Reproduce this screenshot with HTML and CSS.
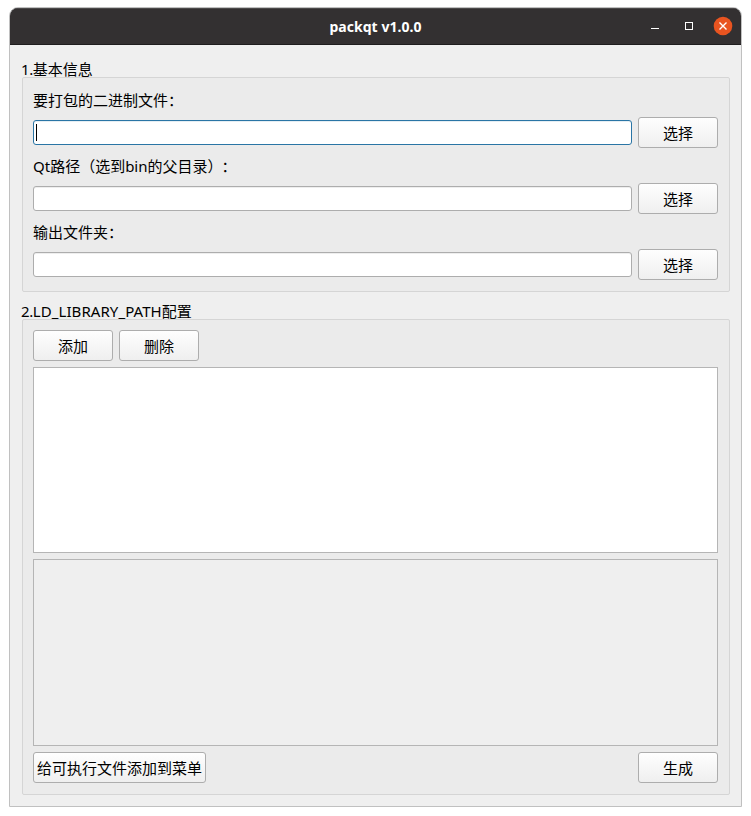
FILE: index.html
```html
<!DOCTYPE html>
<html lang="zh-CN">
<head>
<meta charset="utf-8">
<title>packqt v1.0.0</title>
<link rel="stylesheet" href="styles.css">
</head>
<body>
<div class="window">
  <header class="titlebar">
    <h1 class="caption">packqt v1.0.0</h1>
    <svg class="controls" width="90" height="20" viewBox="0 0 90 20">
      <path d="M9 10.500h8" stroke="#fff" fill="none"/>
      <rect x="43.500" y="4.500" width="7" height="7" stroke="#fff" fill="none"/>
      <circle cx="81" cy="8" r="9.300" fill="#e95420"/>
      <path d="M77.500 4.500l7 7M84.500 4.500l-7 7" stroke="#fff" stroke-width="1.400" fill="none"/>
    </svg>
  </header>
  <main class="content">
    <h2 class="group-title"><span class="num">1.</span>基本信息</h2>
    <section class="group">
      <label class="label">要打包的二进制文件：</label>
      <div class="row"><div class="input focused"><span class="caret"></span></div><button class="btn">选择</button></div>
      <label class="label qt-label">Qt路径（选到bin的父目录<span class="paren">）</span>：</label>
      <div class="row"><div class="input"></div><button class="btn">选择</button></div>
      <label class="label">输出文件夹：</label>
      <div class="row"><div class="input"></div><button class="btn">选择</button></div>
    </section>
    <h2 class="group-title second"><span class="num">2.</span><span class="path">LD_LIBRARY_PATH</span>配置</h2>
    <section class="group group-paths">
      <div class="row"><button class="btn">添加</button><button class="btn">删除</button></div>
      <div class="list"></div>
      <div class="log"></div>
      <div class="row spread"><button class="btn wide">给可执行文件添加到菜单</button><button class="btn">生成</button></div>
    </section>
  </main>
</div>
</body>
</html>
```
FILE: styles.css
```css
* { box-sizing: border-box; }
body {
  margin: 0;
  padding: 7px 9px 9px;
  width: 751px;
  height: 816px;
  overflow: hidden;
  background: #fff;
  color: #000;
  font: 15px/23px "Noto Sans", "Noto Sans CJK SC", sans-serif;
  text-spacing-trim: space-all;
}
.window {
  width: 733px;
  height: 800px;
  border: 1px solid #c0c0c0;
  border-radius: 9px 9px 0 0;
  background: #efefef;
  overflow: hidden;
}
.titlebar {
  display: grid;
  grid-template-columns: 1fr auto 1fr;
  align-items: center;
  height: 37px;
  background: #333031;
  border-top: 1px solid #4b494a;
  border-bottom: 1px solid #1f1d1e;
}
.caption {
  grid-column: 2;
  margin: 0;
  color: #fff;
  font-size: 14px;
  font-weight: 700;
  line-height: 20px;
  letter-spacing: 0.05px;
}
.controls {
  justify-self: end;
  overflow: visible;
  margin-right: 9px;
  margin-top: 3px;
}
.content { padding: 12px 11px 11px 12px; }
.group-title {
  margin: 0 0 -3px -1px;
  height: 23px;
  padding-top: 1px;
  font-size: 15px;
  font-weight: 400;
  white-space: nowrap;
}
.num { letter-spacing: -0.4px; }
.path { letter-spacing: 0.07px; }
.second { margin-top: 7px; }
.group {
  display: flex;
  flex-direction: column;
  gap: 6px;
  width: 708px;
  height: 215px;
  padding: 10px 11px 11px 10px;
  border: 1px solid #d5d5d5;
  border-radius: 2px;
  background: #ebebeb;
}
.group-paths { height: 476px; }
.label { height: 23px; padding-top: 1px; white-space: nowrap; }
.paren { letter-spacing: -1px; }
.row {
  display: flex;
  align-items: center;
  gap: 6px;
  height: 31px;
}
.spread { justify-content: space-between; }
.input {
  flex: 1;
  height: 25px;
  padding: 3px 2px;
  border: 1px solid #adadad;
  border-radius: 3px;
  background: #fff;
  box-shadow: inset 0 1px 0 #eeeeee;
}
.focused { border-color: #2a75a5; box-shadow: inset 0 1px 0 #e6eef3; }
.caret { display: block; width: 1px; height: 17px; background: #000; }
.btn {
  flex: none;
  width: 80px;
  height: 31px;
  padding: 1px 0 0;
  border: 1px solid #adadad;
  border-radius: 3px;
  background: linear-gradient(#fefefe, #efefef);
  color: #000;
  font: inherit;
  white-space: nowrap;
}
.wide { width: 173px; }
.list, .log { border: 1px solid #b5b5b5; }
.list { height: 186px; background: #fff; }
.log { height: 187px; background: #efefef; }
```
